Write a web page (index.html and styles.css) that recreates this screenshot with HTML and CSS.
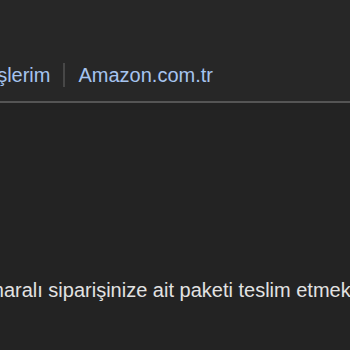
FILE: index.html
```html
<!DOCTYPE html>
<html lang="tr">
<head>
<meta charset="utf-8">
<link rel="stylesheet" href="styles.css">
</head>
<body>
<header class="header">
  <nav class="crumbs">
    <a class="crumb" href="#">Siparişlerim</a>
    <span class="sep"></span>
    <a class="crumb" href="#">Amazon.com.tr</a>
  </nav>
</header>
<main class="main">
  <p class="msg">numaralı siparişinize ait paketi teslim etmek için</p>
</main>
</body>
</html>
```
FILE: styles.css
```css
html, body {
  margin: 0;
  padding: 0;
}
body {
  background: #232323;
  font-family: "Liberation Sans", Arial, sans-serif;
  font-size: 20px;
  overflow: hidden;
  width: 350px;
  height: 350px;
}
.header {
  background: #272727;
  height: 101px;
  border-bottom: 2px solid #555555;
}
.crumbs {
  display: flex;
  align-items: center;
  padding-top: 63px;
  margin-left: -54px;
  line-height: 24px;
  white-space: nowrap;
}
.crumb {
  color: #a6c4ef;
  text-decoration: none;
}
.sep {
  width: 2px;
  height: 24px;
  background: #474747;
  margin: 0 13px;
  flex: none;
}
.main {
  padding-top: 175px;
}
.msg {
  margin: 0 0 0 -35px;
  line-height: 24px;
  color: #e2e2e2;
  white-space: nowrap;
}
```
